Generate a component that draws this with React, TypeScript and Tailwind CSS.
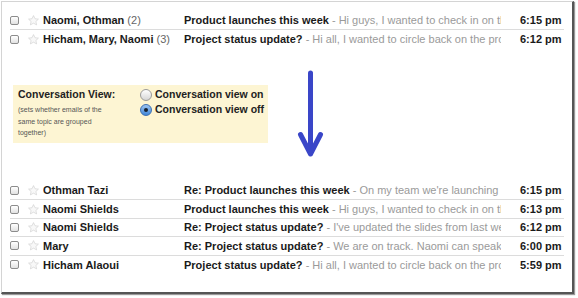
import React from "react";

type RowData = { name: string; count?: string; subject: string; snippet: string; time: string };

const topRows: RowData[] = [
  { name: "Naomi, Othman", count: "(2)", subject: "Product launches this week", snippet: "Hi guys, I wanted to check in on th", time: "6:15 pm" },
  { name: "Hicham, Mary, Naomi", count: "(3)", subject: "Project status update?", snippet: "Hi all, I wanted to circle back on the pro", time: "6:12 pm" },
];

const bottomRows: RowData[] = [
  { name: "Othman Tazi", subject: "Re: Product launches this week", snippet: "On my team we're launching a", time: "6:15 pm" },
  { name: "Naomi Shields", subject: "Product launches this week", snippet: "Hi guys, I wanted to check in on th", time: "6:13 pm" },
  { name: "Naomi Shields", subject: "Re: Project status update?", snippet: "I've updated the slides from last we", time: "6:12 pm" },
  { name: "Mary", subject: "Re: Project status update?", snippet: "We are on track. Naomi can speak", time: "6:00 pm" },
  { name: "Hicham Alaoui", subject: "Project status update?", snippet: "Hi all, I wanted to circle back on the pro", time: "5:59 pm" },
];

function Checkbox() {
  return (
    <div className="w-[9px] h-[9px] shrink-0 rounded-[2px] border border-[#8c8c8c] bg-linear-to-b from-white to-[#e2e2e2]" />
  );
}

function Star() {
  return (
    <svg width="11" height="11" viewBox="0 0 24 24" className="shrink-0">
      <path
        d="M12 1.2l3.3 7 7.5.8-5.6 5.1 1.6 7.5L12 17.8l-6.8 3.8 1.6-7.5L1.2 9l7.5-.8z"
        fill="#f8f8f8"
        stroke="#d2d2d2"
        strokeWidth="1.5"
        strokeLinejoin="round"
      />
    </svg>
  );
}

function Row({ r, last, tall }: { r: RowData; last: boolean; tall: boolean }) {
  const base = tall ? "flex items-center h-[18.4px] box-border" : "flex items-center h-[18px] box-border";
  return (
    <div className={last ? base : base + " border-b border-[#dcdcdc]"}>
      <Checkbox />
      <div className="ml-[9px]">
        <Star />
      </div>
      <div className="ml-[4px] w-[141px] shrink-0 whitespace-nowrap overflow-hidden text-[11px] font-bold text-[#1a1a1a]">
        {r.name}
        {r.count && <span className="font-normal text-[#666]"> {r.count}</span>}
      </div>
      <div className="w-[317px] shrink-0 whitespace-nowrap overflow-hidden text-[11px]">
        <span className="font-bold text-[#1a1a1a]">{r.subject}</span>
        <span className="text-[#9a9a9a]"> - {r.snippet}</span>
      </div>
      <div className="ml-[19px] text-[11px] font-bold text-[#1a1a1a] whitespace-nowrap">{r.time}</div>
    </div>
  );
}

function Radio({ checked }: { checked: boolean }) {
  if (checked) {
    return (
      <div className="w-[12px] h-[12px] shrink-0 rounded-full border border-[#3d6fb0] bg-linear-to-b from-[#9cc4f0] to-[#3f86d8] flex items-center justify-center">
        <div className="w-[4px] h-[4px] rounded-full bg-[#15202e]" />
      </div>
    );
  }
  return (
    <div className="w-[12px] h-[12px] shrink-0 rounded-full border border-[#9a9a9a] bg-linear-to-b from-white to-[#d6d6d6]" />
  );
}

export default function App() {
  return (
    <div className="w-[578px] h-[298px] bg-white overflow-hidden" style={{ fontFamily: '"Liberation Sans", Arial, sans-serif' }}>
      <div className="ml-[1px] mt-[1px] w-[573px] h-[293px] box-border bg-white border-l border-t border-[#d4d4d4] border-r-2 border-b-2 border-r-[#555] border-b-[#555] shadow-[1px_1px_1px_#999]">
        {/* top list */}
        <div className="ml-[8px] mt-[10px] w-[554px]">
          {topRows.map((r, i) => (
            <Row key={i} r={r} last={i === topRows.length - 1} tall={false} />
          ))}
        </div>

        {/* middle */}
        <div className="flex items-start h-[134px]">
          <div className="ml-[11px] mt-[37px] w-[255px] h-[58px] bg-[#fdf5d3] flex">
            <div className="w-[127px] pl-[5px] pt-[3px]">
              <div className="text-[10.5px] leading-[13px] font-bold text-[#222]">Conversation View:</div>
              <div className="mt-[3px] text-[7px] leading-[11.5px] text-[#555]">
                (sets whether emails of the
                <br />
                same topic are grouped
                <br />
                together)
              </div>
            </div>
            <div className="pt-[2px]">
              <div className="flex items-center h-[15px]">
                <Radio checked={false} />
                <span className="ml-[3px] text-[10.5px] font-bold text-[#222] whitespace-nowrap">Conversation view on</span>
              </div>
              <div className="flex items-center h-[15px]">
                <Radio checked={true} />
                <span className="ml-[3px] text-[10.5px] font-bold text-[#222] whitespace-nowrap">Conversation view off</span>
              </div>
            </div>
          </div>
          <svg width="28" height="88" viewBox="0 0 28 88" className="ml-[29px] mt-[22px]">
            <line x1="13.5" y1="3" x2="13.5" y2="83" stroke="#3a46c8" strokeWidth="5" strokeLinecap="round" />
            <polyline points="3.5,64.5 13.5,84 23.5,64.5" fill="none" stroke="#3a46c8" strokeWidth="5" strokeLinecap="round" strokeLinejoin="round" />
          </svg>
        </div>

        {/* bottom list */}
        <div className="ml-[8px] w-[554px]">
          {bottomRows.map((r, i) => (
            <Row key={i} r={r} last={i === bottomRows.length - 1} tall={true} />
          ))}
        </div>
      </div>
    </div>
  );
}
